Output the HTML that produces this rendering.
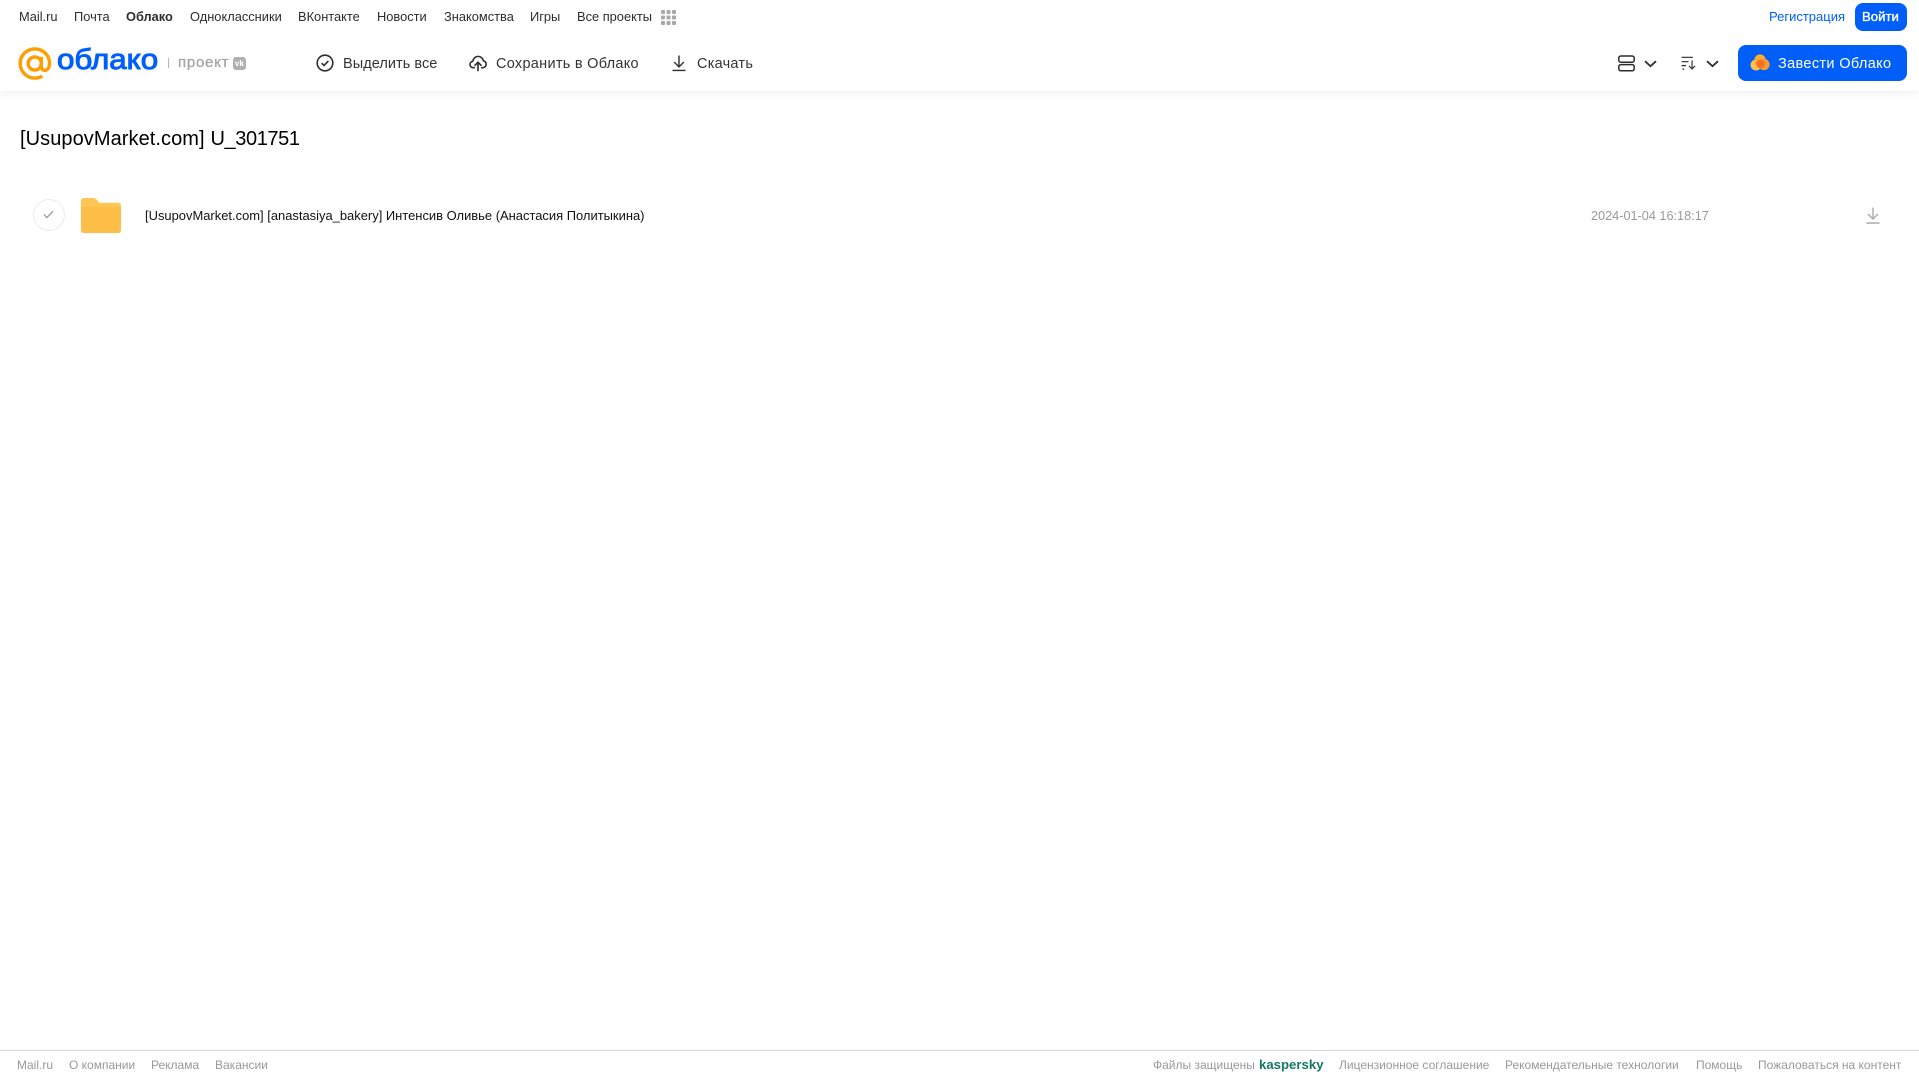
<!DOCTYPE html>
<html lang="ru">
<head>
<meta charset="utf-8">
<title>Облако</title>
<style>
html,body{margin:0;padding:0;background:#fff;width:1919px;height:1079px;overflow:hidden}
body{font-family:"Liberation Sans",Arial,sans-serif;position:relative}
.t{position:absolute;white-space:nowrap;line-height:16px}
.n{top:9px;font-size:12.85px;color:#2c2d2e}
.a{top:56px;font-size:14.5px;line-height:16px;color:#333}
.f{top:1057px;font-size:12px;color:#999}
svg{position:absolute;display:block}
#hdr{position:absolute;left:0;top:0;width:1919px;height:91px;background:#fff;box-shadow:0 2px 8px rgba(0,0,0,.07)}
.btn{position:absolute;background:#005ff9;border-radius:8px}
</style>
</head>
<body>
<div id="hdr"></div>

<span class="t n" style="left:19px">Mail.ru</span>
<span class="t n" style="left:74px">Почта</span>
<span class="t n" style="left:126px;font-weight:bold;font-size:12.8px">Облако</span>
<span class="t n" style="left:190px">Одноклассники</span>
<span class="t n" style="left:298px">ВКонтакте</span>
<span class="t n" style="left:377px">Новости</span>
<span class="t n" style="left:444px">Знакомства</span>
<span class="t n" style="left:530px">Игры</span>
<span class="t n" style="left:577px">Все проекты</span>
<svg style="left:661px;top:10px" width="15" height="15" viewBox="0 0 15 15" fill="#a8a8a8">
<rect x="0" y="0" width="4" height="4" rx="1"/><rect x="5.5" y="0" width="4" height="4" rx="1"/><rect x="11" y="0" width="4" height="4" rx="1"/>
<rect x="0" y="5.5" width="4" height="4" rx="1"/><rect x="5.5" y="5.5" width="4" height="4" rx="1"/><rect x="11" y="5.5" width="4" height="4" rx="1"/>
<rect x="0" y="11" width="4" height="4" rx="1"/><rect x="5.5" y="11" width="4" height="4" rx="1"/><rect x="11" y="11" width="4" height="4" rx="1"/>
</svg>

<span class="t n" style="left:1769px;color:#005ff9;font-size:13px">Регистрация</span>
<div class="btn" style="left:1855px;top:3px;width:52px;height:28px"></div>
<span class="t n" style="left:1862px;color:#fff;top:9px;font-size:13.2px;-webkit-text-stroke:.35px #fff">Войти</span>

<!-- logo -->
<svg style="left:18px;top:47px" width="33.500" height="33" viewBox="0 0 35 35" fill="none" stroke="#ff9e00" stroke-width="3.6">
<circle cx="17.5" cy="17.5" r="7"/>
<path d="M24.500 10.500V20.500c0 2.800 1.700 4.300 3.800 4.300 3.200 0 4.900-3.500 4.900-7.300C33.200 8.700 26.200 2 17.500 2S2 9 2 17.500 9 33 17.500 33c3.200 0 5.800-.8 8-2.200"/>
</svg>
<span class="t" style="left:57px;top:42px;line-height:36px;font-size:29px;color:#005ff9;-webkit-text-stroke:1px #005ff9;transform:scaleX(1.08);transform-origin:left center">облако</span>
<div style="position:absolute;left:168px;top:58px;width:1px;height:10px;background:#b5b5b5"></div>
<span class="t" style="left:178px;top:55px;font-size:15px;color:#a6a6a6;letter-spacing:.75px;-webkit-text-stroke:.35px #a6a6a6">проект</span>
<div style="position:absolute;left:233px;top:57px;width:13px;height:13px;border-radius:3px;background:#b0b0b0"></div>
<span class="t" style="left:235px;top:57px;line-height:13px;font-size:8px;font-weight:bold;color:#fff">vk</span>

<!-- actions -->
<svg style="left:316px;top:54px" width="18" height="18" viewBox="0 0 18 18" fill="none" stroke="#2c2d2e" stroke-width="1.6">
<circle cx="9" cy="9" r="7.8"/><path d="M5.700 9.200l2.300 2.300 4.400-4.600"/>
</svg>
<span class="t a" style="left:343px;letter-spacing:.05px">Выделить все</span>
<svg style="left:469px;top:54px" width="18" height="18" viewBox="0 0 19 18" fill="none" stroke="#2c2d2e" stroke-width="1.7" stroke-linecap="round" stroke-linejoin="round">
<path d="M5.500 14H4.600C2.600 14 1 12.500 1 10.600c0-1.700 1.200-3.100 2.900-3.400C4.600 4.200 6.900 2 9.600 2c2.800 0 5 2 5.600 4.700 1.700.4 2.900 1.900 2.900 3.700 0 2-1.600 3.600-3.600 3.600h-1"/>
<path d="M9.500 17V8.500M6.300 11.400l3.200-3.200 3.200 3.200"/>
</svg>
<span class="t a" style="left:496px;letter-spacing:.28px">Сохранить в Облако</span>
<svg style="left:672px;top:54px" width="14" height="18" viewBox="0 0 15 18" fill="none" stroke="#2c2d2e" stroke-width="1.5">
<path d="M7.500 1v11.500M2.300 8l5.200 5.200L12.700 8M.5 17h14"/>
</svg>
<span class="t a" style="left:697px;letter-spacing:.25px">Скачать</span>

<svg style="left:1618px;top:55px" width="17" height="17" viewBox="0 0 17 17" fill="none" stroke="#2c2d2e" stroke-width="1.5">
<rect x=".8" y="1" width="15.400" height="6.200" rx="2"/><rect x=".8" y="9.600" width="15.400" height="6.200" rx="2"/>
</svg>
<svg style="left:1644px;top:60px" width="13" height="8" viewBox="0 0 13 8" fill="none" stroke="#2c2d2e" stroke-width="1.8"><path d="M1 1.200l5.500 5 5.500-5"/></svg>
<svg style="left:1681px;top:56px" width="16" height="14" viewBox="0 0 17 16" fill="none" stroke="#2c2d2e" stroke-width="1.3">
<path d="M0 1.500h13M0 6.500h8M0 11h5M1 15h2M12 5v10M8.500 11.300l3.500 3.500 3.500-3.500"/>
</svg>
<svg style="left:1706px;top:60px" width="13" height="8" viewBox="0 0 13 8" fill="none" stroke="#2c2d2e" stroke-width="1.8"><path d="M1 1.200l5.500 5 5.500-5"/></svg>

<div class="btn" style="left:1738px;top:45px;width:169px;height:36px"></div>
<svg style="left:1750px;top:54px" width="20" height="17" viewBox="0 0 20 17">
<circle cx="6" cy="11" r="5.500" fill="#ffc04d"/><circle cx="10" cy="6" r="5.600" fill="#ffa930"/><circle cx="14" cy="10.500" r="5.600" fill="#ff9a2e"/><circle cx="10.500" cy="10" r="4.200" fill="#f5701f"/>
</svg>
<span class="t a" style="left:1778px;color:#fff;letter-spacing:.35px">Завести Облако</span>

<!-- content -->
<span class="t" style="left:20px;top:127px;line-height:24px;font-size:20px;color:#000;letter-spacing:.07px">[UsupovMarket.com]</span>
<span class="t" style="left:210.500px;top:127px;line-height:24px;font-size:20px;color:#000;letter-spacing:-.4px">U_301751</span>

<div style="position:absolute;left:33px;top:199px;width:30px;height:30px;border:1px solid #ececec;border-radius:50%"></div>
<svg style="left:43px;top:210px" width="11" height="9" viewBox="0 0 11 9" fill="none" stroke="#999" stroke-width="1.3"><path d="M1 4.600l3 3L10 1.200"/></svg>

<svg style="left:81px;top:198px" width="40" height="35" viewBox="0 0 40 35">
<path d="M3 0h9c2 0 3 .8 4 2l2 2.800H37c1.700 0 3 1.300 3 3V32c0 1.700-1.300 3-3 3H3c-1.700 0-3-1.300-3-3V3c0-1.700 1.300-3 3-3z" fill="#ffc655"/>
<path d="M0 9h40v23c0 1.700-1.300 3-3 3H3c-1.700 0-3-1.300-3-3z" fill="#ffbe48"/>
</svg>

<span class="t" style="left:145px;top:208px;font-size:12.95px;color:#111">[UsupovMarket.com] [anastasiya_bakery] Интенсив Оливье (Анастасия Политыкина)</span>
<span class="t" style="left:1591px;top:208px;font-size:12.7px;color:#999">2024-01-04 16:18:17</span>
<svg style="left:1866px;top:207px" width="14" height="17" viewBox="0 0 14 17" fill="none" stroke="#aaa" stroke-width="1.4">
<path d="M7 .5v11M2 7l5 5 5-5M.5 16h13"/>
</svg>

<!-- footer -->
<div style="position:absolute;left:0;top:1050px;width:1919px;height:1px;background:#d6d6d6"></div>
<span class="t f" style="left:17px">Mail.ru</span>
<span class="t f" style="left:69px">О компании</span>
<span class="t f" style="left:151px">Реклама</span>
<span class="t f" style="left:215px">Вакансии</span>
<span class="t f" style="left:1153px">Файлы защищены</span>
<span class="t f" style="left:1259px;font-size:13.2px;font-weight:bold;color:#14785f">kaspersky</span>
<span class="t f" style="left:1339px">Лицензионное соглашение</span>
<span class="t f" style="left:1505px">Рекомендательные технологии</span>
<span class="t f" style="left:1696px">Помощь</span>
<span class="t f" style="left:1758px">Пожаловаться на контент</span>
</body>
</html>
